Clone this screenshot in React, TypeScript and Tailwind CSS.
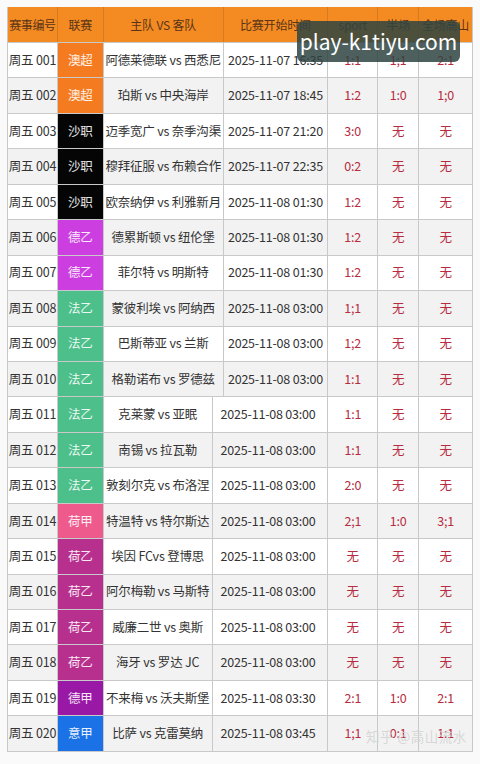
type Row = {
  id: string;
  league: string;
  color: string;
  match: string;
  time: string;
  sport: string;
  half: string;
  full: string;
};

const rows: Row[] = [
  { id: "周五 001", league: "澳超", color: "bg-[#f47b20]", match: "阿德莱德联 vs 西悉尼", time: "2025-11-07 16:35", sport: "1:1", half: "1;1", full: "2:1" },
  { id: "周五 002", league: "澳超", color: "bg-[#f47b20]", match: "珀斯 vs 中央海岸", time: "2025-11-07 18:45", sport: "1:2", half: "1:0", full: "1;0" },
  { id: "周五 003", league: "沙职", color: "bg-[#050505]", match: "迈季宽广 vs 奈季沟渠", time: "2025-11-07 21:20", sport: "3:0", half: "无", full: "无" },
  { id: "周五 004", league: "沙职", color: "bg-[#050505]", match: "穆拜征服 vs 布赖合作", time: "2025-11-07 22:35", sport: "0:2", half: "无", full: "无" },
  { id: "周五 005", league: "沙职", color: "bg-[#050505]", match: "欧奈纳伊 vs 利雅新月", time: "2025-11-08 01:30", sport: "1:2", half: "无", full: "无" },
  { id: "周五 006", league: "德乙", color: "bg-[#cc3ee0]", match: "德累斯顿 vs 纽伦堡", time: "2025-11-08 01:30", sport: "1:2", half: "无", full: "无" },
  { id: "周五 007", league: "德乙", color: "bg-[#cc3ee0]", match: "菲尔特 vs 明斯特", time: "2025-11-08 01:30", sport: "1:2", half: "无", full: "无" },
  { id: "周五 008", league: "法乙", color: "bg-[#4cbf8a]", match: "蒙彼利埃 vs 阿纳西", time: "2025-11-08 03:00", sport: "1;1", half: "无", full: "无" },
  { id: "周五 009", league: "法乙", color: "bg-[#4cbf8a]", match: "巴斯蒂亚 vs 兰斯", time: "2025-11-08 03:00", sport: "1;2", half: "无", full: "无" },
  { id: "周五 010", league: "法乙", color: "bg-[#4cbf8a]", match: "格勒诺布 vs 罗德兹", time: "2025-11-08 03:00", sport: "1:1", half: "无", full: "无" },
  { id: "周五 011", league: "法乙", color: "bg-[#4cbf8a]", match: "克莱蒙 vs 亚眠", time: "2025-11-08 03:00", sport: "1:1", half: "无", full: "无" },
  { id: "周五 012", league: "法乙", color: "bg-[#4cbf8a]", match: "南锡 vs 拉瓦勒", time: "2025-11-08 03:00", sport: "1:1", half: "无", full: "无" },
  { id: "周五 013", league: "法乙", color: "bg-[#4cbf8a]", match: "敦刻尔克 vs 布洛涅", time: "2025-11-08 03:00", sport: "2:0", half: "无", full: "无" },
  { id: "周五 014", league: "荷甲", color: "bg-[#ef5a8c]", match: "特温特 vs 特尔斯达", time: "2025-11-08 03:00", sport: "2;1", half: "1:0", full: "3;1" },
  { id: "周五 015", league: "荷乙", color: "bg-[#b8308e]", match: "埃因 FCvs 登博思", time: "2025-11-08 03:00", sport: "无", half: "无", full: "无" },
  { id: "周五 016", league: "荷乙", color: "bg-[#b8308e]", match: "阿尔梅勒 vs 马斯特", time: "2025-11-08 03:00", sport: "无", half: "无", full: "无" },
  { id: "周五 017", league: "荷乙", color: "bg-[#b8308e]", match: "威廉二世 vs 奥斯", time: "2025-11-08 03:00", sport: "无", half: "无", full: "无" },
  { id: "周五 018", league: "荷乙", color: "bg-[#b8308e]", match: "海牙 vs 罗达 JC", time: "2025-11-08 03:00", sport: "无", half: "无", full: "无" },
  { id: "周五 019", league: "德甲", color: "bg-[#9a18a6]", match: "不来梅 vs 沃夫斯堡", time: "2025-11-08 03:30", sport: "2:1", half: "1:0", full: "2:1" },
  { id: "周五 020", league: "意甲", color: "bg-[#1a72e6]", match: "比萨 vs 克雷莫纳", time: "2025-11-08 03:45", sport: "1;1", half: "0:1", full: "1:1" },
];

const cell = "flex h-full items-center justify-center whitespace-nowrap border-r border-[#c9c9c9]";
const head = "flex items-center justify-center whitespace-nowrap border-r border-[#d97a1c]";

function TableRow({ row, index }: { row: Row; index: number }) {
  const lower = index >= 10;
  const bg = index % 2 === 0 ? "bg-white" : "bg-[#f2f2f2]";
  return (
    <div className={`flex h-[35.45px] border-b border-[#c9c9c9] ${bg}`}>
      <div className={`${cell} w-[50px] text-[#333]`}>{row.id}</div>
      <div className={`${cell} w-[46px] text-white/90 ${row.color}`}>{row.league}</div>
      <div className={`${cell} ${lower ? "w-[109px]" : "w-[120px]"} text-[#333]`}>{row.match}</div>
      <div
        className={`${cell} ${lower ? "w-[116px] justify-start pl-[8px]" : "w-[105px]"} text-[#333]`}
      >
        {row.time}
      </div>
      <div className={`${cell} w-[50px] text-[#b82c40]`}>{row.sport}</div>
      <div className={`${cell} w-[41px] text-[#b82c40]`}>{row.half}</div>
      <div className="flex h-full w-[53px] items-center justify-center text-[#b82c40]">{row.full}</div>
    </div>
  );
}

export default function App() {
  return (
    <div
      className="relative h-[764px] w-[480px] overflow-hidden bg-[#fafafa] pl-[7px] pt-[7px]"
      style={{ fontFamily: '"Noto Sans CJK SC", "Noto Sans", sans-serif' }}
    >
      <div className="w-[466px] border-l border-r border-[#c9c9c9] text-[12.5px] tracking-[-0.2px]">
        <div className="flex h-[36px] border-b border-[#c9c9c9] bg-[#f38b22] text-[12px] text-[#5a3418]">
          <div className={`${head} w-[50px] tracking-[-0.4px]`}>赛事编号</div>
          <div className={`${head} w-[46px]`}>联赛</div>
          <div className={`${head} w-[120px]`}>主队 VS 客队</div>
          <div className={`${head} w-[105px]`}>比赛开始时间</div>
          <div className={`${head} w-[50px]`}>sport</div>
          <div className={`${head} w-[41px]`}>半场</div>
          <div className="flex w-[53px] items-center justify-center whitespace-nowrap">全场高山</div>
        </div>
        {rows.map((row, i) => (
          <TableRow key={row.id} row={row} index={i} />
        ))}
      </div>

      <div className="absolute left-[297px] top-[21px] flex h-[41px] w-[163px] items-center justify-center rounded-[6px] bg-[#2f4442]/85 text-[21px] text-white">
        play-k1tiyu.com
      </div>

      <div className="absolute left-[366px] top-[726px] whitespace-nowrap text-[13.5px] tracking-[0.5px] text-[#d4d4d4]/90">
        知乎 @高山流水
      </div>
    </div>
  );
}
